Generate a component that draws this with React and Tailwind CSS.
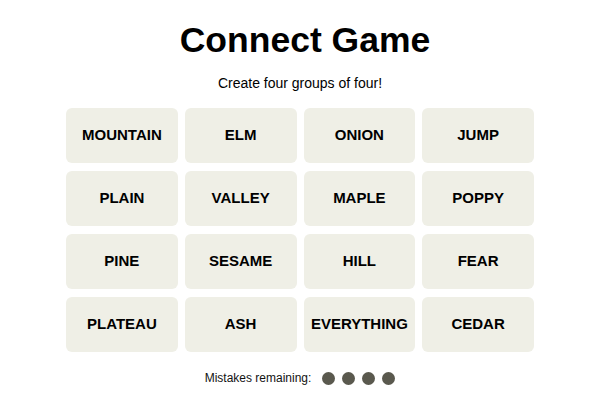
import React from 'react'

const WORDS = [
  'MOUNTAIN', 'ELM', 'ONION', 'JUMP',
  'PLAIN', 'VALLEY', 'MAPLE', 'POPPY',
  'PINE', 'SESAME', 'HILL', 'FEAR',
  'PLATEAU', 'ASH', 'EVERYTHING', 'CEDAR',
]

export default function App() {
  return (
    <div
      className="w-[600px] h-[400px] bg-white flex flex-col items-center text-black"
      style={{ fontFamily: '"Liberation Sans", Arial, sans-serif' }}
    >
      {/* Heading */}
      <h1 className="mt-[22px] ml-[10px] text-[35.5px] leading-[36px] font-bold">Connect Game</h1>
      <p className="mt-[15px] text-[14px] leading-[20px]">Create four groups of four!</p>

      {/* Word board */}
      <div className="mt-[15px] w-[468px] grid grid-cols-4 gap-x-[7px] gap-y-[8px]">
        {WORDS.map(word => (
          <button
            key={word}
            className="h-[55px] rounded-[6px] bg-[#efefe6] flex items-center justify-center text-[15px] font-bold"
          >
            {word}
          </button>
        ))}
      </div>

      {/* Remaining attempts */}
      <div className="mt-[19px] flex items-center">
        <span className="text-[12px] leading-[14px] text-[#121212]">Mistakes remaining:</span>
        <div className="ml-[11px] flex gap-[7px]">
          {[0, 1, 2, 3].map(i => (
            <span key={i} className="w-[13px] h-[13px] rounded-full bg-[#5a594e]" />
          ))}
        </div>
      </div>
    </div>
  )
}
